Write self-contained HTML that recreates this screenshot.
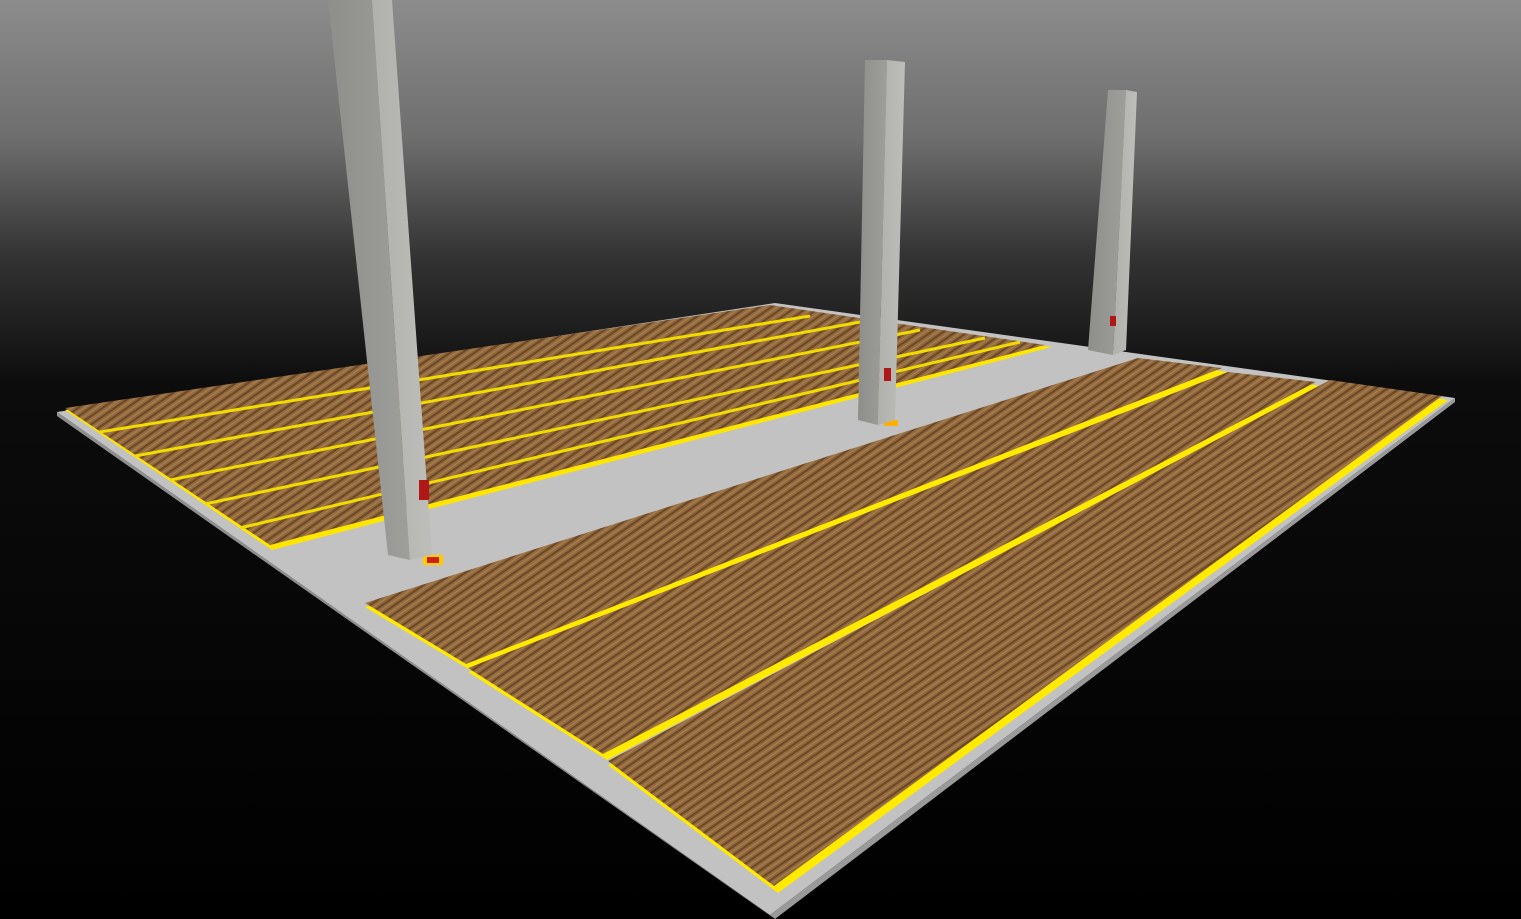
<!DOCTYPE html>
<html><head><meta charset="utf-8"><style>
html,body{margin:0;padding:0;width:1521px;height:919px;overflow:hidden;background:#000}
svg{display:block}
</style></head><body>
<svg width="1521" height="919" viewBox="0 0 1521 919" xmlns="http://www.w3.org/2000/svg">
<defs>
<linearGradient id="bg" x1="0" y1="0" x2="0" y2="1">
<stop offset="0" stop-color="#8c8c8c"/>
<stop offset="0.15" stop-color="#6e6e6e"/>
<stop offset="0.28" stop-color="#333"/>
<stop offset="0.42" stop-color="#0c0c0c"/>
<stop offset="1" stop-color="#000"/>
</linearGradient>
<pattern id="wood" width="7" height="7" patternUnits="userSpaceOnUse" patternTransform="rotate(-35)">
<rect width="7" height="7" fill="#926a3e"/>
<rect width="7" height="2" fill="#6a4726"/>
<rect y="4" width="7" height="1" fill="#ad8050"/>
</pattern>
<linearGradient id="pl" x1="0" y1="0" x2="1" y2="0">
<stop offset="0" stop-color="#8e8e8b"/><stop offset="1" stop-color="#9e9e9a"/>
</linearGradient>
<linearGradient id="pr" x1="0" y1="0" x2="1" y2="0">
<stop offset="0" stop-color="#b0b0ac"/><stop offset="1" stop-color="#bdbdb9"/>
</linearGradient>
</defs>
<rect width="1521" height="919" fill="url(#bg)"/>
<polygon points="57,412 775,303 1455,398 770,915" fill="#c2c2c2"/>
<polygon points="57,412 770,915 775,919 57,416" fill="#8f8f8f"/>
<polygon points="770,915 1455,398 1455,402 775,919" fill="#9a9a9a"/>
<polygon points="65,410 770,307 1052,347 272,550" fill="#ffe600"/>
<polygon points="65,408 770,305 1045,345 270,545" fill="url(#wood)"/>
<g stroke="#f2dc00" stroke-width="3">
<line x1="100" y1="432" x2="810" y2="316"/>
<line x1="135" y1="456" x2="860" y2="322"/>
<line x1="170" y1="480" x2="920" y2="330"/>
<line x1="205" y1="504" x2="985" y2="338"/>
<line x1="240" y1="528" x2="1020" y2="342"/>
</g>
<polygon points="365,607 1140,360 1228,372 470,670" fill="#ffea00"/>
<polygon points="365,603 1138,358 1222,368 466,664" fill="url(#wood)"/>
<polygon points="468,672 1230,375 1322,386 607,760" fill="#ffea00"/>
<polygon points="468,668 1228,372 1316,382 603,754" fill="url(#wood)"/>
<polygon points="608,765 1333,383 1448,400 778,893" fill="#ffea00"/>
<polygon points="608,761 1330,380 1442,396 774,886" fill="url(#wood)"/>
<rect x="423" y="555" width="20" height="10" fill="#ffcc00"/><rect x="427" y="557" width="12" height="6" fill="#d02010"/>
<rect x="884" y="420" width="14" height="6" fill="#ffb000"/>
<polygon points="328,0 372,0 410,560 388,555" fill="url(#pl)"/>
<polygon points="372,0 392,0 432,555 410,560" fill="url(#pr)"/>
<rect x="419" y="480" width="10" height="20" fill="#b01818"/>
<polygon points="865,60 887,60 878,425 858,420" fill="url(#pl)"/>
<polygon points="887,60 905,62 895,420 878,425" fill="url(#pr)"/>
<rect x="884" y="368" width="7" height="13" fill="#b01818"/>
<polygon points="1108,90 1126,90 1113,355 1088,350" fill="url(#pl)"/>
<polygon points="1126,90 1137,92 1126,350 1113,355" fill="url(#pr)"/>
<rect x="1110" y="316" width="6" height="10" fill="#b01818"/>
</svg>
</body></html>
